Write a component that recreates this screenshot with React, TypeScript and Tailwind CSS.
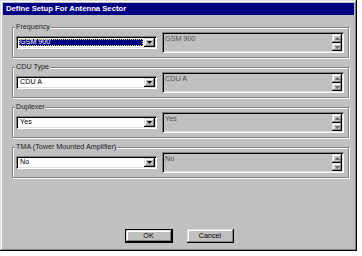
import React from "react";

const raised =
  "shadow-[inset_-1px_-1px_0_#000,inset_1px_1px_0_#dfdfdf,inset_-2px_-2px_0_#808080,inset_2px_2px_0_#fff]";
const sunken =
  "shadow-[inset_1px_1px_0_#808080,inset_-1px_-1px_0_#fff,inset_2px_2px_0_#000,inset_-2px_-2px_0_#dfdfdf]";

function Arrow({ up, color }: { up?: boolean; color: string }) {
  return (
    <svg width="5" height="3" viewBox="0 0 5 3" className="block shrink-0 w-[5px] h-[3px]">
      <path d={up ? "M2.5 0 L5 3 L0 3 Z" : "M0 0 L5 0 L2.5 3 Z"} fill={color} />
    </svg>
  );
}

function Combo({ value, selected }: { value: string; selected?: boolean }) {
  return (
    <div className={`w-[141px] h-[13px] bg-white p-[2px] flex ${sunken}`}>
      <div className="flex-1 flex items-center p-px">
        {selected ? (
          <div className="h-full w-full flex items-center pl-px bg-[#000080] text-white outline outline-1 outline-dotted outline-[#d8d860] -outline-offset-1">
            {value}
          </div>
        ) : (
          <div className="h-full w-full flex items-center pl-px text-black">{value}</div>
        )}
      </div>
      <div className={`w-[11px] h-[9px] bg-[#c0c0c0] flex items-center justify-center ${raised}`}>
        <Arrow color="#000" />
      </div>
    </div>
  );
}

function ReadOnly({ value }: { value: string }) {
  return (
    <div className={`w-[182px] h-[21px] bg-[#c0c0c0] p-[2px] flex ${sunken}`}>
      <div className="flex-1 pl-px leading-[9px] text-[#505050]">{value}</div>
      <div className="w-[10px] flex flex-col">
        <div className={`h-[9px] bg-[#c0c0c0] flex items-center justify-center ${raised}`}>
          <Arrow up color="#6a6a6a" />
        </div>
        <div className={`h-[8px] bg-[#c0c0c0] flex items-center justify-center ${raised}`}>
          <Arrow color="#6a6a6a" />
        </div>
      </div>
    </div>
  );
}

function Group({ label, value, selected }: { label: string; value: string; selected?: boolean }) {
  return (
    <div className="relative h-[31px] border border-[#808080] shadow-[1px_1px_0_#fff,inset_1px_1px_0_#fff] flex items-center pl-[3px] gap-[5px]">
      <span className="absolute left-[2px] top-[-5px] bg-[#c0c0c0] px-px leading-[8px] text-[#222]">{label}</span>
      <Combo value={value} selected={selected} />
      <ReadOnly value={value} />
    </div>
  );
}

export default function App() {
  return (
    <div className="w-[362px] h-[256px] bg-white font-['Liberation_Sans',Arial,sans-serif] text-[7.2px] text-black">
      <div className={`w-[357px] h-[251px] bg-[#c0c0c0] p-[3px] flex flex-col ${raised}`}>
        <div className="h-[12px] bg-[#000080] text-white font-bold text-[7.7px] pl-[3px] flex items-center">
          Define Setup For Antenna Sector
        </div>
        <div className="flex-1 flex flex-col pl-[9px] pr-[5px] pt-[12px]">
          <div className="flex flex-col gap-[9px]">
            <Group label="Frequency" value="GSM 900" selected />
            <Group label="CDU Type" value="CDU A" />
            <Group label="Duplexer" value="Yes" />
            <Group label="TMA (Tower Mounted Amplifier)" value="No" />
          </div>
          <div className="mt-[51px] flex justify-center gap-[14px] pr-[3px]">
            <div className="w-[48px] h-[14px] border border-black">
              <div className={`w-full h-full flex items-center justify-center ${raised}`}>OK</div>
            </div>
            <div className={`w-[47px] h-[14px] flex items-center justify-center ${raised}`}>Cancel</div>
          </div>
        </div>
      </div>
    </div>
  );
}
